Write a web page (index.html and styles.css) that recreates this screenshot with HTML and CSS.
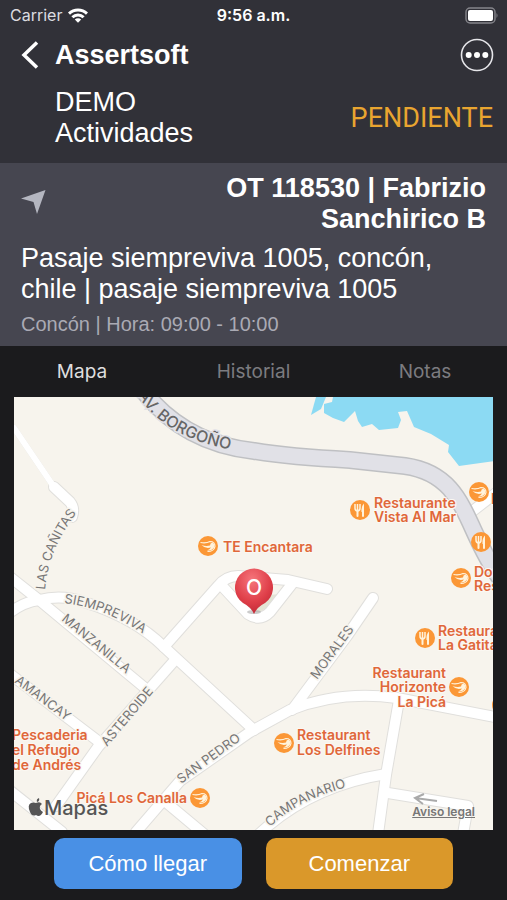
FILE: index.html
```
<!DOCTYPE html>
<html lang="es">
<head>
    <meta charset="UTF-8" />
    <meta name="viewport" content="width=device-width, initial-scale=1.0" />
    <title>Assertsoft</title>
    <link rel="stylesheet" href="styles.css">
</head>
<body>

    <header class="app-header">
        <div class="status-bar">
            <div class="status-left">
                <span>Carrier</span>
                <svg width="20" height="15" viewBox="0 0 20 15" fill="none" stroke="#fff" stroke-width="3">
                    <path d="M1 5.6a13 13 0 0 1 18 0" />
                    <path d="M4.4 9.2a8 8 0 0 1 11.2 0" />
                    <path d="M10 14.8l-3.2-3.2a4.6 4.6 0 0 1 6.4 0z" fill="#fff" stroke="none" />
                </svg>
            </div>
            <span class="status-time">9:56 a.m.</span>
            <svg class="battery" width="34" height="17" viewBox="0 0 34 17">
                <rect x="1" y="1" width="29" height="15" rx="4" fill="none" stroke="#85858b" stroke-width="1.4" />
                <rect x="3" y="3" width="25" height="11" rx="2" fill="#fff" />
                <path d="M31.5 6q2 2.500 0 5z" fill="#85858b" />
            </svg>
        </div>
        <div class="title-bar">
            <button class="icon-button back" aria-label="Volver">
                <svg width="18" height="28" viewBox="0 0 18 28" fill="none" stroke="#fff" stroke-width="3.500">
                    <path d="M16 1.500L3 14l13 12.500" />
                </svg>
            </button>
            <h1>Assertsoft</h1>
            <button class="icon-button" aria-label="Más opciones">
                <svg width="34" height="34" viewBox="0 0 34 34" fill="#fff">
                    <circle cx="17" cy="17" r="15.500" fill="none" stroke="#e6e6ea" stroke-width="1.600" />
                    <circle cx="8.700" cy="17" r="3" />
                    <circle cx="17" cy="17" r="3" />
                    <circle cx="25.300" cy="17" r="3" />
                </svg>
            </button>
        </div>
        <div class="subtitle-bar">
            <p class="subtitle">DEMO<br>Actividades</p>
            <span class="estado">PENDIENTE</span>
        </div>
    </header>

    <section class="orden">
        <div class="orden-top">
            <svg width="26" height="26" viewBox="0 0 26 26">
                <path d="M0 9.500L24.500 1 16 25 12.500 13z" fill="#b4b6c0" />
            </svg>
            <h2>OT 118530 | Fabrizio Sanchirico B</h2>
        </div>
        <p class="direccion">Pasaje siempreviva 1005, concón, chile | pasaje siempreviva 1005</p>
        <p class="horario">Concón | Hora: 09:00 - 10:00</p>
    </section>

    <nav class="tabs">
        <button class="tab active">Mapa</button>
        <button class="tab">Historial</button>
        <button class="tab">Notas</button>
    </nav>

    <main>
        <div class="mapa">
            <svg class="mapa-svg" viewBox="14 397 479 433">
                <defs>
                    <g id="camaron">
                        <circle r="10" fill="#fb9736" />
                        <path d="M-7.500-3.500Q-2-2.500 2-4.500Q7-4.500 7 .5Q6 5.500-.5 5.500" fill="none" stroke="#fff3dc" stroke-width="1.200" />
                        <path d="M-6.500-1Q-2 .5 2-.5Q2-3 4.500-3.500Q7-2 6 1.500Q4 5-1 4.500Q2 3.500 3 1.500Q-3 3-6.500-1z" fill="#fff3dc" />
                    </g>
                    <g id="cubiertos">
                        <circle r="10" fill="#fb9736" />
                        <path d="M-2.500 0V6M3 0V6" stroke="#fff3dc" stroke-width="2" stroke-linecap="round" />
                        <path d="M-5-6V-2Q-5 1-2.500 1T0-2V-6M-2.500-6V0" fill="none" stroke="#fff3dc" stroke-width="1.500" />
                        <path d="M4-6.500Q1-4 1.500 2H4z" fill="#fff3dc" />
                    </g>
                    <radialGradient id="rojo" cx=".45" cy=".25" r=".8">
                        <stop offset="0" stop-color="#f6767c" />
                        <stop offset=".6" stop-color="#df3f49" />
                        <stop offset="1" stop-color="#bd2634" />
                    </radialGradient>

                    <!-- calles -->
                    <g id="calles">
                        <path d="M14 428L54 487" stroke-width="6" />
                        <path d="M54 487L70 502Q75 508 72 517" />
                        <path d="M10 577L39 600L145 688" />
                        <path d="M8 614Q23 602 39 600Q62 594 84 602Q135 618 164 647L254 730" />
                        <path d="M10 674L98 741" />
                        <path d="M56 806L98 747L175 660" />
                        <path d="M164 647L218 586Q226 576 238 576L288 580L327 589" />
                        <path d="M222 586L248 614Q260 622 270 612L292 584" />
                        <path d="M373 598L347 636L292 710" />
                        <path d="M136 832L180 781L250 732L290 710Q340 690 397 698L500 718" />
                        <path d="M399 700L386 775L378 834" />
                        <path d="M168 804L204 834" />
                        <path d="M259 834Q310 786 386 774" />
                        <path d="M388 793L468 806L463 834" />
                        <path d="M8 789L62 832" />
                        <path d="M470 513L496 493" />
                    </g>

                    <path id="t-borgono" d="M137 395Q168 441 240 451" />
                    <path id="t-canitas" d="M45 590Q48 550 78 511" />
                    <path id="t-siempreviva" d="M64 603Q106 608 143 634" />
                    <path id="t-manzanilla" d="M61 620L130 677" />
                    <path id="t-amancay" d="M14 682L70 724" />
                    <path id="t-asteroide" d="M107 747L156 689" />
                    <path id="t-pedro" d="M181 784L244 738" />
                    <path id="t-morales" d="M317 680L356 627" />
                    <path id="t-campanario" d="M270 827Q299 799 348 787" />
                </defs>

                <rect x="14" y="397" width="479" height="433" fill="#f7f4ed" />
                <path d="M316 397L311 415 321 409 326 397z" fill="#8cdaf3" />
                <path d="M333 397L332 402 324 404V413L333 418 344 422 355 411 358 421 362 427 372 424 379 430 398 428 401 420 398 412 407 411 414 427 431 434 449 445 448 452 459 466 494 461V397z" fill="#8cdaf3" />
                <path d="M240 598L247 604 256 614 268 607 280 594z" fill="#e3e4d4" />

                <use href="#calles" class="calle-borde" />
                <use href="#calles" class="calle" />
                <path class="avenida-borde" d="M138 384Q180 443 254 451Q290 457 350 460L405 466C468 475 464 530 500 578" />
                <path class="avenida" d="M138 384Q180 443 254 451Q290 457 350 460L405 466C468 475 464 530 500 578" />

                <g class="calle-nombre">
                    <text class="grande"><textPath href="#t-borgono">AV. BORGOÑO</textPath></text>
                    <text><textPath href="#t-canitas">LAS CAÑITAS</textPath></text>
                    <text><textPath href="#t-siempreviva">SIEMPREVIVA</textPath></text>
                    <text><textPath href="#t-manzanilla">MANZANILLA</textPath></text>
                    <text><textPath href="#t-amancay">AMANCAY</textPath></text>
                    <text><textPath href="#t-asteroide">ASTEROIDE</textPath></text>
                    <text><textPath href="#t-pedro">SAN PEDRO</textPath></text>
                    <text><textPath href="#t-morales">MORALES</textPath></text>
                    <text><textPath href="#t-campanario">CAMPANARIO</textPath></text>
                </g>
                <path d="M437 801L415 798M424 794L415 798L423 804" fill="none" stroke="#aaa" stroke-width="2" />

                <!-- lugares -->
                <use href="#camaron" x="208" y="546" />
                <use href="#cubiertos" x="360" y="510" />
                <use href="#camaron" x="479" y="492" />
                <use href="#cubiertos" x="481" y="542" />
                <use href="#camaron" x="461" y="578" />
                <use href="#cubiertos" x="425" y="638" />
                <use href="#camaron" x="459" y="687" />
                <use href="#camaron" x="284" y="743" />
                <use href="#camaron" x="200" y="798" />
                <use href="#camaron" x="502" y="705" />
                <g class="lugar">
                    <text x="223" y="552">TE Encantara</text>
                    <text x="374" y="508">Restaurante</text>
                    <text x="374" y="522">Vista Al Mar</text>
                    <text x="491" y="504">L</text>
                    <text x="474" y="577">Don</text>
                    <text x="474" y="591">Restaurant</text>
                    <text x="438" y="636">Restaurant</text>
                    <text x="438" y="650">La Gatita</text>
                    <g text-anchor="end">
                        <text x="446" y="678">Restaurant</text>
                        <text x="446" y="692">Horizonte</text>
                        <text x="446" y="707">La Picá</text>
                        <text x="187" y="803">Picá Los Canalla</text>
                    </g>
                    <text x="297" y="740">Restaurant</text>
                    <text x="297" y="755">Los Delfines</text>
                    <text x="12" y="740">Pescaderia</text>
                    <text x="12" y="755">el Refugio</text>
                    <text x="12" y="770">de Andrés</text>
                </g>

                <!-- marcador -->
                <ellipse cx="254" cy="612" rx="7" ry="2" fill="#999" opacity=".5" />
                <path d="M254 614Q251 607 243 603A19 19 0 1 1 265 603Q257 607 254 614z" fill="url(#rojo)" />
                <text class="marcador-letra" x="254" y="595">O</text>

                <g fill="#555">
                    <path d="M37 802Q36 799 39 798Q40 801 37 802zM36 803Q40 801 42 804Q39 806 40 809Q41 811 43 812Q40 818 36 815Q32 817 30 812Q27 805 31 803Q33 802 36 803z" />
                    <text class="marca" x="44" y="815">Mapas</text>
                </g>
            </svg>
            <a class="aviso" href="#">Aviso legal</a>
        </div>
    </main>

    <footer class="acciones">
        <button class="boton azul">Cómo llegar</button>
        <button class="boton naranja">Comenzar</button>
    </footer>

</body>
</html>
```

FILE: styles.css
```
* {
    box-sizing: border-box;
}

body {
    font-family: "Liberation Sans", Arial, sans-serif;
    margin: 0;
    background-color: #1b1b1d;
    color: #fff;
}

h1, h2, p {
    margin: 0;
}

button {
    font-family: inherit;
    border: none;
    cursor: pointer;
}

svg {
    display: block;
}

.app-header {
    background-color: #313138;
    padding-bottom: 14px;
}

.status-bar {
    display: grid;
    grid-template-columns: 1fr auto 1fr;
    align-items: center;
    height: 30px;
    padding: 0 8px;
    font-family: Inter, sans-serif;
    font-size: 16px;
}

.status-left {
    display: flex;
    align-items: center;
    gap: 6px;
    padding-left: 2px;
    color: #dcdce0;
}

.status-time {
    font-weight: 600;
}

.battery {
    justify-self: end;
}

.title-bar {
    display: flex;
    align-items: center;
    height: 50px;
    padding: 0 13px 0 21px;
}

.title-bar h1 {
    flex: 1;
    font-size: 27px;
    line-height: 31px;
}

.icon-button {
    padding: 0;
    background: none;
}

.back {
    width: 34px;
}

.subtitle-bar {
    display: flex;
    justify-content: space-between;
    align-items: center;
    padding: 7px 14px 0 55px;
    font-size: 27px;
    line-height: 31px;
}

.estado {
    font-family: Roboto, sans-serif;
    color: #e9a530;
}

.orden {
    background-color: #464650;
    padding: 10px 21px;
}

.orden-top {
    display: flex;
    justify-content: space-between;
    align-items: flex-start;
}

.orden-top svg {
    margin-top: 16px;
}

.orden h2 {
    width: 280px;
    font-size: 27px;
    line-height: 31px;
    text-align: right;
}

.direccion {
    margin-top: 8px;
    font-size: 27px;
    line-height: 31px;
}

.horario {
    margin-top: 7px;
    font-size: 20px;
    line-height: 24px;
    color: #aaaab4;
}

.tabs {
    display: grid;
    grid-template-columns: 11fr 12fr 11fr;
    height: 51px;
}

.tab {
    background: none;
    font-family: Inter, sans-serif;
    font-size: 19px;
    color: #7c7c80;
}

.tab.active {
    color: #dededf;
}

.mapa {
    position: relative;
    margin: 0 14px;
    font-family: Inter, sans-serif;
}

.mapa-svg {
    width: 100%;
    height: auto;
}

.calle,
.calle-borde {
    fill: none;
    stroke-linecap: round;
    stroke-linejoin: round;
}

.calle-borde {
    stroke: #e0dfdc;
    stroke-width: 12px;
}

.calle {
    stroke: #fff;
    stroke-width: 10px;
}

.avenida,
.avenida-borde {
    fill: none;
    stroke: #bfc0c3;
    stroke-width: 18px;
}

.avenida {
    stroke: #e1e1e7;
    stroke-width: 15px;
}

.calle-nombre {
    font-size: 13px;
    fill: #777;
    stroke: #f7f4ed;
    stroke-width: 3px;
    paint-order: stroke;
}

.calle-nombre .grande {
    font-size: 16px;
    font-weight: 500;
    fill: #666;
    stroke: #e1e1e7;
}

.lugar {
    font-size: 14px;
    font-weight: 600;
    fill: #e0673a;
    stroke: #fbf8f2;
    stroke-width: 2px;
    paint-order: stroke;
}

.marcador-letra {
    font-size: 21px;
    font-weight: 500;
    fill: #fff;
    text-anchor: middle;
}

.marca {
    font-size: 20px;
    font-weight: 500;
}

.aviso {
    position: absolute;
    right: 18px;
    bottom: 11px;
    font-size: 12px;
    font-weight: 600;
    color: #777;
}

.acciones {
    display: flex;
    gap: 24px;
    padding: 8px 54px 11px;
}

.boton {
    flex: 1;
    height: 51px;
    border-radius: 10px;
    font-size: 22px;
    color: #fff;
}

.azul {
    background-color: #4990e5;
}

.naranja {
    background-color: #da982a;
}
```
